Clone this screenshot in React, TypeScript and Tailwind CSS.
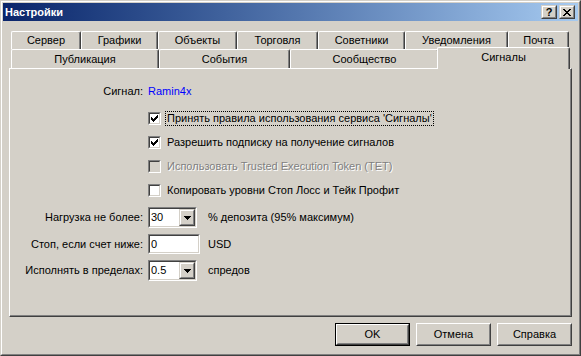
import React from "react";

type R = [number, number, number];
const pix = (rects: R[]) =>
  rects.map(([x, y, w], i) => <rect key={i} x={x} y={y} width={w} height={1} />);

function CheckMark() {
  return (
    <svg width="7" height="7" viewBox="0 0 7 7" shapeRendering="crispEdges" fill="#000000">
      {pix([[6, 0, 1], [5, 1, 2], [0, 2, 1], [4, 2, 3], [0, 3, 2], [3, 3, 3], [0, 4, 5], [1, 5, 3], [2, 6, 1]])}
    </svg>
  );
}

function Arrow() {
  return (
    <svg width="7" height="4" viewBox="0 0 7 4" shapeRendering="crispEdges" fill="#000000">
      {pix([[0, 0, 7], [1, 1, 5], [2, 2, 3], [3, 3, 1]])}
    </svg>
  );
}

function XGlyph() {
  return (
    <svg width="8" height="7" viewBox="0 0 8 7" shapeRendering="crispEdges" fill="#000000">
      {pix([[0, 0, 2], [6, 0, 2], [1, 1, 2], [5, 1, 2], [2, 2, 4], [3, 3, 2], [2, 4, 4], [1, 5, 2], [5, 5, 2], [0, 6, 2], [6, 6, 2]])}
    </svg>
  );
}

function Checkbox({ checked, disabled }: { checked?: boolean; disabled?: boolean }) {
  return (
    <div className="w-[13px] h-[13px] shrink-0 border border-t-[#808080] border-l-[#808080] border-r-white border-b-white">
      <div
        className={`w-full h-full border border-t-[#404040] border-l-[#404040] border-r-[#D4D0C8] border-b-[#D4D0C8] p-px ${
          disabled ? "bg-[#D4D0C8]" : "bg-white"
        }`}
      >
        {checked && <CheckMark />}
      </div>
    </div>
  );
}

function CheckRow({
  label,
  checked,
  disabled,
  focused,
  className = "",
}: {
  label: string;
  checked?: boolean;
  disabled?: boolean;
  focused?: boolean;
  className?: string;
}) {
  return (
    <div className={`h-[15px] flex items-center pl-[138px] ${className}`}>
      <Checkbox checked={checked} disabled={disabled} />
      <span
        className={`ml-[4px] h-[15px] flex items-center px-px border border-dotted whitespace-nowrap ${
          focused ? "border-black" : "border-transparent"
        } ${disabled ? "text-[#808080] [text-shadow:1px_1px_0_#ffffff]" : ""}`}
      >
        {label}
      </span>
    </div>
  );
}

function Sunken({ className = "", children }: { className?: string; children: React.ReactNode }) {
  return (
    <div className={`shrink-0 border border-t-[#808080] border-l-[#808080] border-r-white border-b-white ${className}`}>
      <div className="h-full border border-t-[#404040] border-l-[#404040] border-r-[#D4D0C8] border-b-[#D4D0C8] bg-white flex items-center">
        {children}
      </div>
    </div>
  );
}

function Combo({ value, className = "" }: { value: string; className?: string }) {
  return (
    <Sunken className={`h-[21px] ${className}`}>
      <span className="flex-1 pl-px">{value}</span>
      <div className="w-[16px] h-full border border-t-[#D4D0C8] border-l-[#D4D0C8] border-r-[#404040] border-b-[#404040]">
        <div className="w-full h-full border border-t-white border-l-white border-r-[#808080] border-b-[#808080] bg-[#D4D0C8] flex items-center justify-center">
          <Arrow />
        </div>
      </div>
    </Sunken>
  );
}

function CaptionBtn({ children, className = "" }: { children: React.ReactNode; className?: string }) {
  return (
    <div className={`w-[16px] h-[14px] border border-t-[#D4D0C8] border-l-[#D4D0C8] border-r-[#404040] border-b-[#404040] ${className}`}>
      <div className="w-full h-full border border-t-white border-l-white border-r-[#808080] border-b-[#808080] bg-[#D4D0C8] flex items-center justify-center font-bold text-black text-[11px] leading-none">
        {children}
      </div>
    </div>
  );
}

function Button({ label, isDefault }: { label: string; isDefault?: boolean }) {
  if (isDefault) {
    return (
      <div className="w-[75px] h-[23px] border border-black">
        <div className="w-full h-full border border-t-white border-l-white border-r-[#404040] border-b-[#404040]">
          <div className="w-full h-full border border-t-[#D4D0C8] border-l-[#D4D0C8] border-r-[#808080] border-b-[#808080] flex items-center justify-center">
            {label}
          </div>
        </div>
      </div>
    );
  }
  return (
    <div className="w-[75px] h-[23px] border border-t-white border-l-white border-r-[#404040] border-b-[#404040]">
      <div className="w-full h-full border border-t-[#D4D0C8] border-l-[#D4D0C8] border-r-[#808080] border-b-[#808080] flex items-center justify-center">
        {label}
      </div>
    </div>
  );
}

const row1 = [
  { label: "Сервер", w: "w-[70px]" },
  { label: "Графики", w: "w-[77px]" },
  { label: "Объекты", w: "w-[79px]" },
  { label: "Торговля", w: "w-[81px]" },
  { label: "Советники", w: "w-[87px]" },
  { label: "Уведомления", w: "w-[103px]" },
  { label: "Почта", w: "w-[61px]" },
];

const row2 = [
  { label: "Публикация", w: "w-[148px]" },
  { label: "События", w: "w-[131px]" },
  { label: "Сообщество", w: "w-[149px]" },
];

function Tab({ label, w }: { label: string; w: string }) {
  return (
    <div
      className={`${w} h-full shrink-0 flex items-center justify-center border-t border-l border-r border-t-white border-l-white border-r-[#404040] rounded-t-[2px] shadow-[inset_-1px_0_0_#808080] whitespace-nowrap`}
    >
      {label}
    </div>
  );
}

export default function App() {
  return (
    <div className="w-[581px] h-[356px] bg-[#D4D0C8] border border-t-[#D4D0C8] border-l-[#D4D0C8] border-r-[#404040] border-b-[#404040] text-[11px] leading-[13px] text-black font-['Liberation_Sans',Arial,sans-serif] select-none">
      <div className="h-full border border-t-white border-l-white border-r-[#808080] border-b-[#808080] p-px flex flex-col">
        <div className="h-[18px] shrink-0 flex items-center bg-linear-to-r from-[#0A246A] to-[#A6CAF0] pl-[2px] pr-[3px]">
          <span className="font-bold text-white flex-1">Настройки</span>
          <CaptionBtn>?</CaptionBtn>
          <CaptionBtn className="ml-[2px]">
            <XGlyph />
          </CaptionBtn>
        </div>

        <div className="mt-[10px] mx-[6px]">
          <div className="flex h-[18px] pl-[2px]">
            {row1.map((t) => (
              <Tab key={t.label} label={t.label} w={t.w} />
            ))}
          </div>
          <div className="flex h-[19px] pl-[2px]">
            {row2.map((t) => (
              <Tab key={t.label} label={t.label} w={t.w} />
            ))}
            <div className="relative z-10 w-[133px] h-[22px] -mt-[2px] -ml-[2px] shrink-0 flex justify-center pt-[3px] bg-[#D4D0C8] border-t border-l border-r border-t-white border-l-white border-r-[#404040] rounded-t-[2px] shadow-[inset_-1px_0_0_#808080]">
              Сигналы
            </div>
          </div>
          <div className="h-[249px] border border-t-white border-l-white border-r-[#404040] border-b-[#404040] shadow-[inset_-1px_-1px_0_#808080] flex flex-col">
            <div className="h-[15px] mt-[15px] flex items-center">
              <span className="w-[133px] text-right">Сигнал:</span>
              <span className="ml-[5px] text-[#0000FF]">Ramin4x</span>
            </div>
            <CheckRow className="mt-[12px]" label="Принять правила использования сервиса 'Сигналы'" checked focused />
            <CheckRow className="mt-[9px]" label="Разрешить подписку на получение сигналов" checked />
            <CheckRow className="mt-[9px]" label="Использовать Trusted Execution Token (TET)" disabled />
            <CheckRow className="mt-[9px]" label="Копировать уровни Стоп Лосс и Тейк Профит" />

            <div className="mt-[9px] flex items-center">
              <span className="w-[133px] text-right">Нагрузка не более:</span>
              <Combo className="ml-[5px] w-[49px]" value="30" />
              <span className="ml-[11px]">% депозита (95% максимум)</span>
            </div>
            <div className="mt-[6px] flex items-center">
              <span className="w-[133px] text-right">Стоп, если счет ниже:</span>
              <Sunken className="ml-[5px] w-[52px] h-[20px]">
                <span className="pl-px">0</span>
              </Sunken>
              <span className="ml-[8px]">USD</span>
            </div>
            <div className="mt-[6px] flex items-center">
              <span className="w-[133px] text-right">Исполнять в пределах:</span>
              <Combo className="ml-[5px] w-[49px]" value="0.5" />
              <span className="ml-[11px]">спредов</span>
            </div>
          </div>
        </div>

        <div className="mt-[6px] flex justify-end gap-[6px] pr-[6px]">
          <Button label="OK" isDefault />
          <Button label="Отмена" />
          <Button label="Справка" />
        </div>
      </div>
    </div>
  );
}
